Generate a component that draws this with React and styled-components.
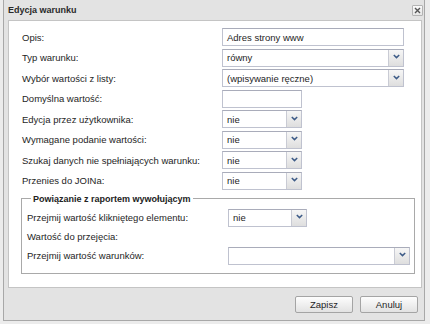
import React from 'react';
import styled, { createGlobalStyle } from 'styled-components';

const Global = createGlobalStyle`
  html, body { margin: 0; padding: 0; background: #ececec; }
  body { font-family: "Liberation Sans", Arial, sans-serif; font-size: 9.5px; color: #1e1e1e; }
  * { box-sizing: border-box; }
`;

const Page = styled.div`
  width: 430px;
  height: 324px;
  overflow: hidden;
  padding-left: 3px;
`;

const Win = styled.div`
  width: 422px;
  height: 321px;
  border: 1px solid #a8a8a8;
  border-top: none;
  background: #e3e3e3;
  display: flex;
  flex-direction: column;
  padding: 0 2px 0 4px;
`;

const Header = styled.div`
  height: 20px;
  flex: none;
  display: flex;
  align-items: center;
  justify-content: space-between;
`;

const Title = styled.div`
  font-weight: bold;
  font-size: 9px;
  color: #2a2a2a;
`;

const CloseBtn = styled.div`
  width: 11px;
  height: 11px;
  margin-right: -1px;
  border: 1px solid #b4b4b4;
  border-radius: 1px;
  background: linear-gradient(#fafafa, #e6e6e6);
  display: flex;
  align-items: center;
  justify-content: center;
`;

const Body = styled.div`
  height: 268px;
  flex: none;
  background: #fff;
  border: 1px solid #c4c4c4;
  padding: 7px 0 0 12px;
`;

const Form = styled.div`
  display: grid;
  grid-template-columns: 200px 1fr;
  grid-auto-rows: 20.57px;
  margin-left: 1px;
`;

const Label = styled.div`
  display: flex;
  align-items: center;
  height: 18px;
  white-space: nowrap;
`;

const FieldCell = styled.div`
  height: 18px;
`;

const Input = styled.div`
  width: ${p => p.$w}px;
  height: 18px;
  border: 1px solid #bfc2cf;
  border-top-color: #a9acba;
  background: #fff;
  padding-left: 4px;
  display: flex;
  align-items: center;
  white-space: nowrap;
`;

const SelectBox = styled.div`
  width: ${p => p.$w}px;
  height: 18px;
  border: 1px solid #bfc2cf;
  border-top-color: #a9acba;
  background: #fff;
  display: flex;
`;

const SelectText = styled.div`
  flex: 1;
  padding-left: 4px;
  display: flex;
  align-items: center;
  white-space: nowrap;
`;

const Trigger = styled.div`
  width: 15px;
  border-left: 1px solid #c9cbd4;
  background: linear-gradient(#f6f6f6, #dedede);
  display: flex;
  align-items: center;
  justify-content: center;
  padding-bottom: 2px;
`;

const Fieldset = styled.fieldset`
  margin: 0;
  width: 394px;
  border: 1px solid #a9a9a9;
  padding: 4px 0 7px 5px;
  min-width: 0;
`;

const Legend = styled.legend`
  font-weight: bold;
  font-size: 9px;
  color: #222;
  padding: 0 2px;
  margin-left: 4px;
  line-height: 12px;
`;

const SubForm = styled.div`
  display: grid;
  grid-template-columns: 201px 1fr;
  grid-auto-rows: 19px;
`;

const Footer = styled.div`
  flex: 1;
  display: flex;
  justify-content: flex-end;
  align-items: flex-start;
  gap: 7px;
  padding: 8px 4px 0 0;
`;

const Button = styled.div`
  width: 58px;
  height: 17px;
  border: 1px solid #a4a4a4;
  border-radius: 2px;
  background: linear-gradient(#fdfdfd, #e2e2e2);
  display: flex;
  align-items: center;
  justify-content: center;
  color: #1e1e1e;
`;

const Chevron = () => (
  <svg width="7" height="5" viewBox="0 0 7 5">
    <path d="M0.8 1 L3.5 3.6 L6.2 1" fill="none" stroke="#3d5b87" strokeWidth="1.5" />
  </svg>
);

const Select = ({ w, value }) => (
  <SelectBox $w={w}>
    <SelectText>{value}</SelectText>
    <Trigger><Chevron /></Trigger>
  </SelectBox>
);

const rows = [
  ['Opis:', <Input $w={182}>Adres strony www</Input>],
  ['Typ warunku:', <Select w={182} value="równy" />],
  ['Wybór wartości z listy:', <Select w={182} value="(wpisywanie ręczne)" />],
  ['Domyślna wartość:', <Input $w={80} />],
  ['Edycja przez użytkownika:', <Select w={80} value="nie" />],
  ['Wymagane podanie wartości:', <Select w={80} value="nie" />],
  ['Szukaj danych nie spełniających warunku:', <Select w={80} value="nie" />],
  ['Przenies do JOINa:', <Select w={80} value="nie" />],
];

export default function App() {
  return (
    <Page>
      <Global />
      <Win>
        <Header>
          <Title>Edycja warunku</Title>
          <CloseBtn>
            <svg width="7" height="7" viewBox="0 0 7 7">
              <path d="M1 1 L6 6 M6 1 L1 6" stroke="#555" strokeWidth="1.4" />
            </svg>
          </CloseBtn>
        </Header>
        <Body>
          <Form>
            {rows.map(([l, f], i) => (
              <React.Fragment key={i}>
                <Label>{l}</Label>
                <FieldCell>{f}</FieldCell>
              </React.Fragment>
            ))}
          </Form>
          <Fieldset>
            <Legend>Powiązanie z raportem wywołującym</Legend>
            <SubForm>
              <Label>Przejmij wartość klikniętego elementu:</Label>
              <FieldCell><Select w={79} value="nie" /></FieldCell>
              <Label>Wartość do przejęcia:</Label>
              <FieldCell />
              <Label>Przejmij wartość warunków:</Label>
              <FieldCell><Select w={182} value="" /></FieldCell>
            </SubForm>
          </Fieldset>
        </Body>
        <Footer>
          <Button>Zapisz</Button>
          <Button>Anuluj</Button>
        </Footer>
      </Win>
    </Page>
  );
}
